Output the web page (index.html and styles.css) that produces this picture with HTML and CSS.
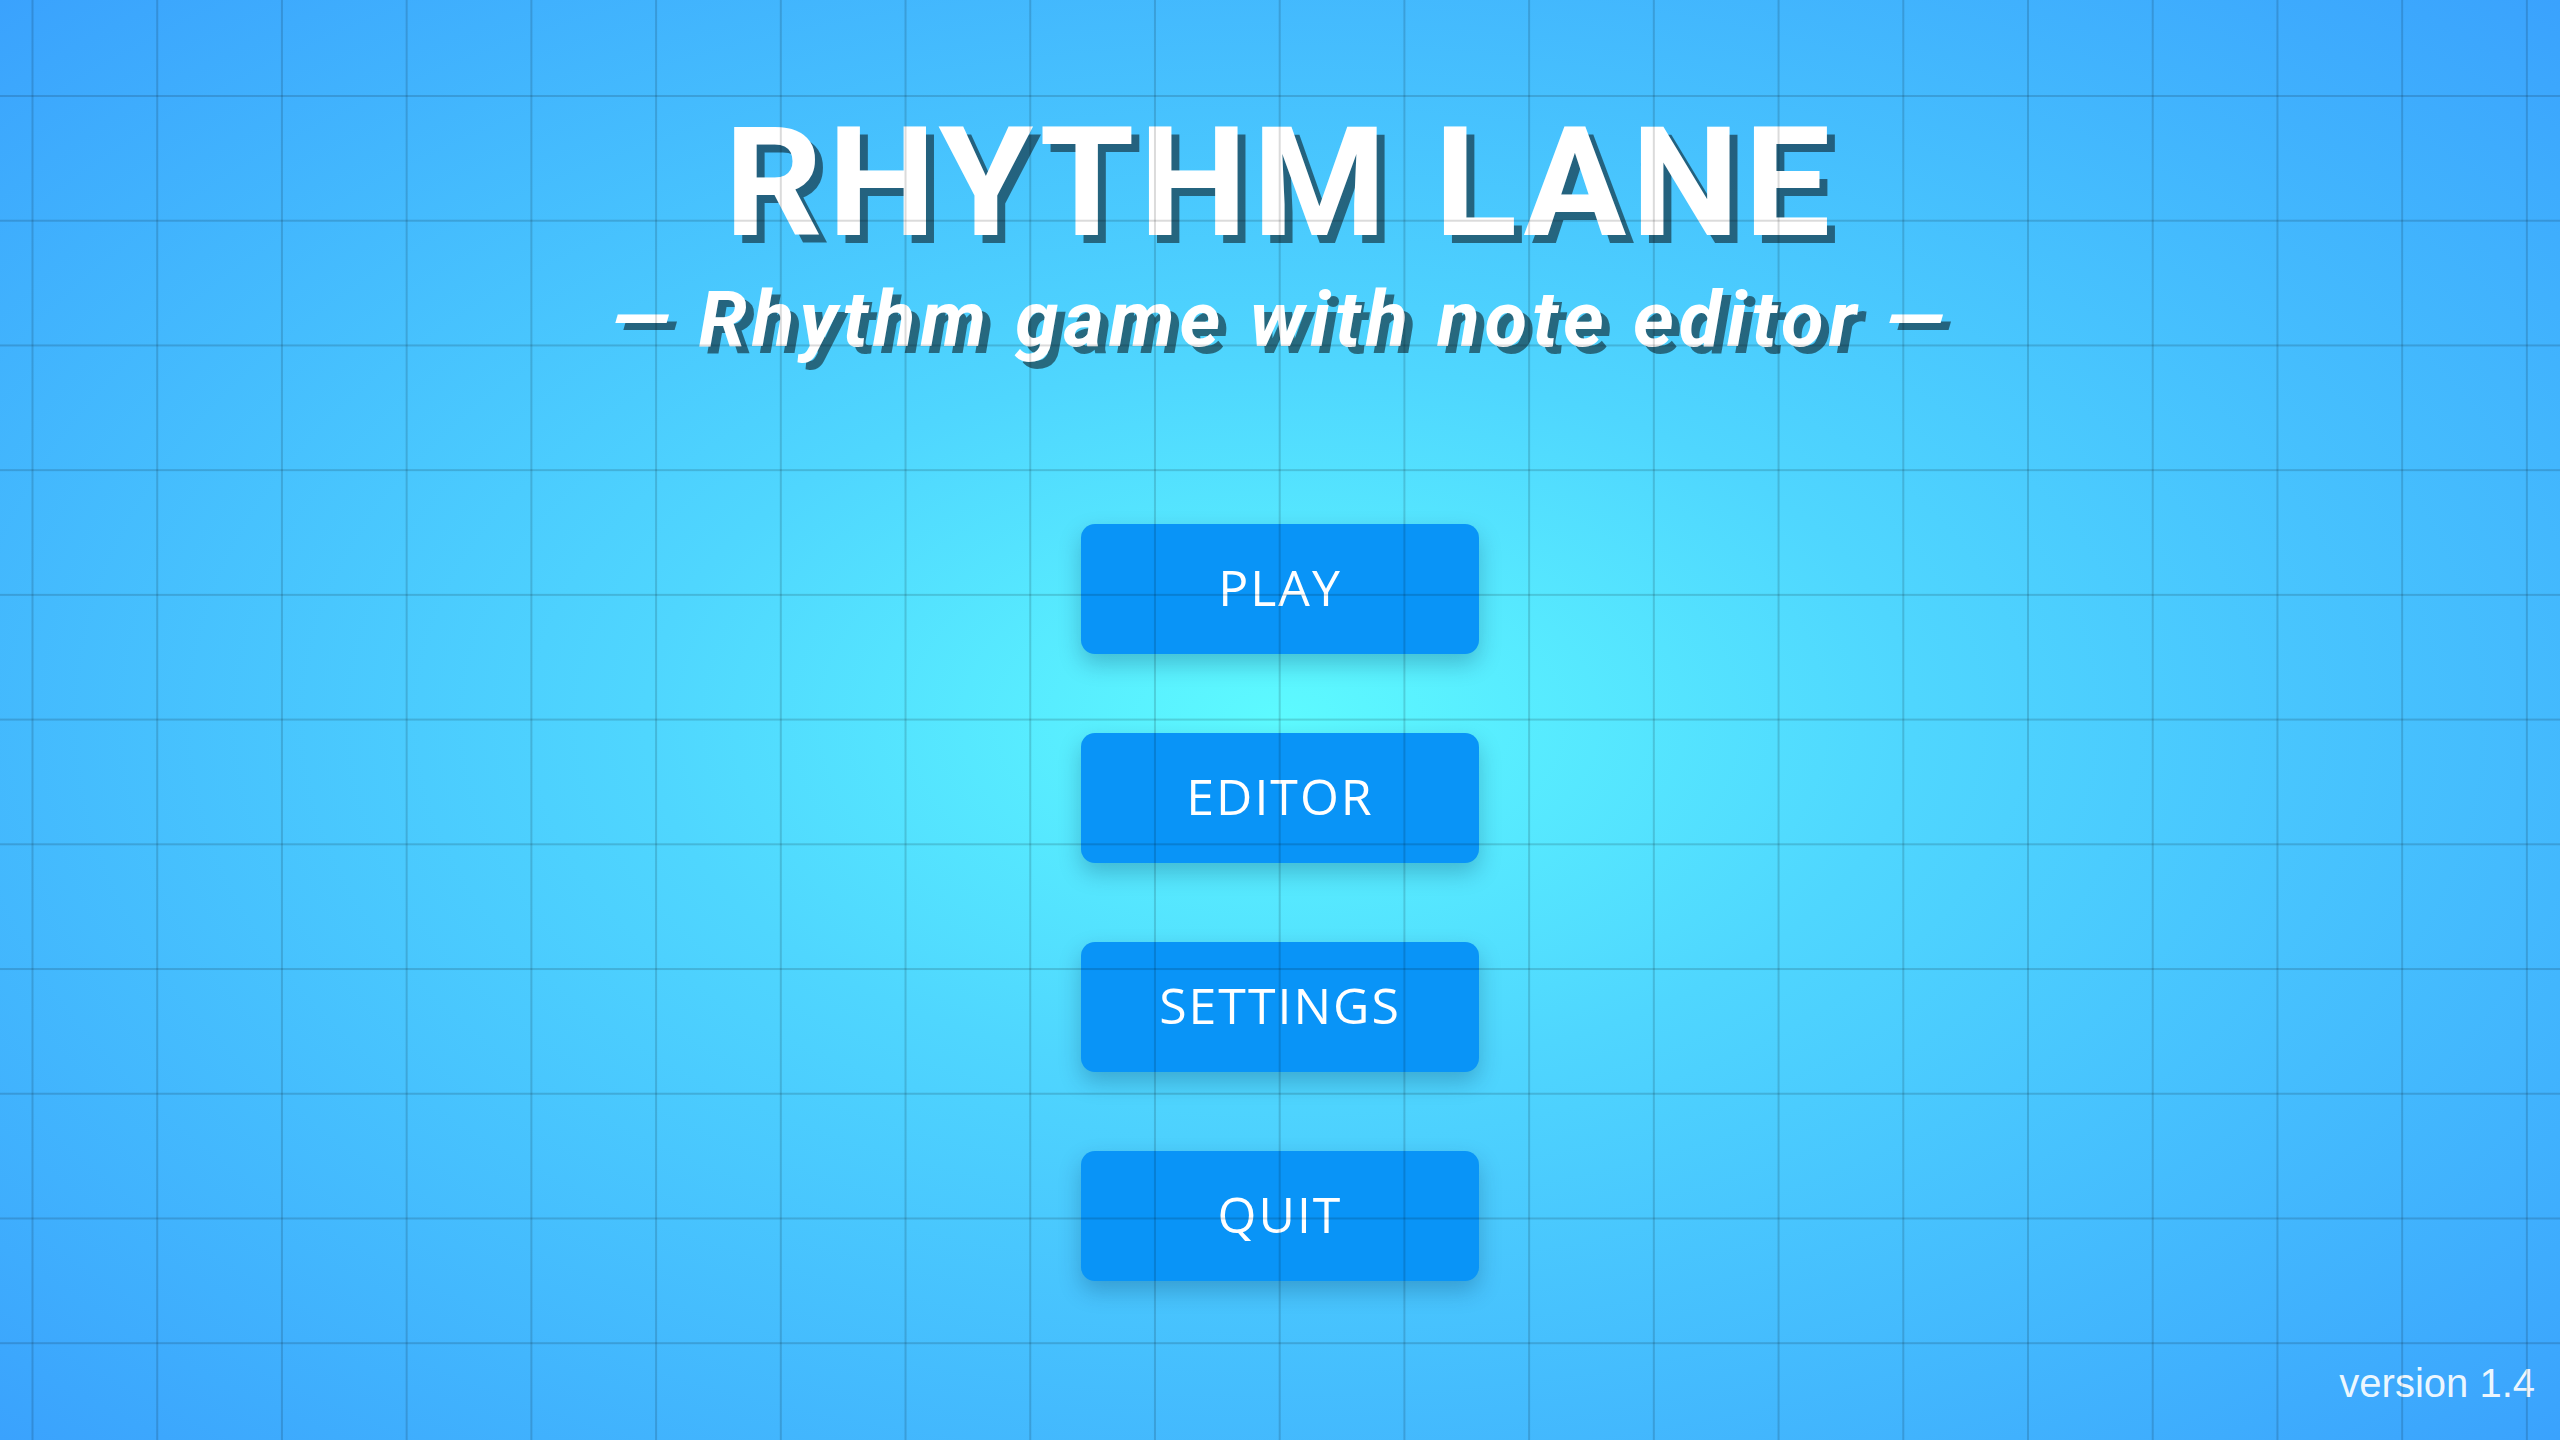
FILE: index.html
```html
<!DOCTYPE html>
<html lang="en">
<head>
<meta charset="utf-8">
<title>Rhythm Lane</title>
<link rel="stylesheet" href="styles.css">
</head>
<body>
  <main class="menu">
    <header class="brand">
      <h1 class="title">RHYTHM LANE</h1>
      <p class="subtitle">— Rhythm game with note editor —</p>
    </header>
    <nav class="buttons">
      <button class="btn">PLAY</button>
      <button class="btn">EDITOR</button>
      <button class="btn">SETTINGS</button>
      <button class="btn">QUIT</button>
    </nav>
  </main>
  <footer class="footer">
    <span class="version">version 1.4</span>
  </footer>
  <div class="grid-overlay"></div>
</body>
</html>
```
FILE: styles.css
```css
html, body {
  margin: 0;
  padding: 0;
}

body {
  width: 100vw;
  height: 100vh;
  overflow: hidden;
  display: flex;
  flex-direction: column;
  background: radial-gradient(ellipse at 50% 50%, #5dfaff 0%, #4fd6fe 35%, #3aa2fd 100%);
  font-family: Roboto, "Noto Sans", sans-serif;
  color: #fff;
}

.menu {
  flex: 1;
  display: flex;
  flex-direction: column;
  align-items: center;
  padding-top: 106px;
}

.brand {
  display: flex;
  flex-direction: column;
  align-items: center;
}

.title {
  margin: 0;
  font-family: Roboto, "Noto Sans", sans-serif;
  font-weight: 700;
  font-size: 153px;
  line-height: 1;
  letter-spacing: 5px;
  text-shadow: 8px 8px 0 rgba(0, 0, 0, 0.5);
}

.subtitle {
  margin: 22px 0 0;
  font-family: Roboto, "Noto Sans", sans-serif;
  font-weight: 700;
  font-style: italic;
  font-size: 78px;
  line-height: 1;
  letter-spacing: 5px;
  text-shadow: 8px 7px 0 rgba(0, 0, 0, 0.5);
}

.buttons {
  margin-top: 165px;
  display: flex;
  flex-direction: column;
  gap: 79px;
}

.btn {
  width: 398px;
  height: 130px;
  border: none;
  border-radius: 14px;
  background: #0994f7;
  color: #fff;
  font-family: "Open Sans", Roboto, sans-serif;
  font-weight: 400;
  font-size: 50px;
  letter-spacing: 2px;
  box-shadow: 0 10px 22px rgba(0, 40, 80, 0.25);
  padding: 0 0 4px;
  cursor: pointer;
}

.footer {
  display: flex;
  justify-content: flex-end;
  padding: 0 25px 37px;
}

.version {
  font-family: "Liberation Sans", Arial, sans-serif;
  font-size: 40px;
  line-height: 1;
  color: rgba(255, 255, 255, 0.92);
}

.grid-overlay {
  position: fixed;
  inset: 0;
  pointer-events: none;
  background-image:
    linear-gradient(to right, rgba(0, 0, 0, 0.14) 0, rgba(0, 0, 0, 0.14) 1.5px, transparent 1.5px),
    linear-gradient(to bottom, rgba(0, 0, 0, 0.14) 0, rgba(0, 0, 0, 0.14) 1.5px, transparent 1.5px);
  background-size: 124.72px 124.72px;
  background-position: 31.5px 95px;
}
```
